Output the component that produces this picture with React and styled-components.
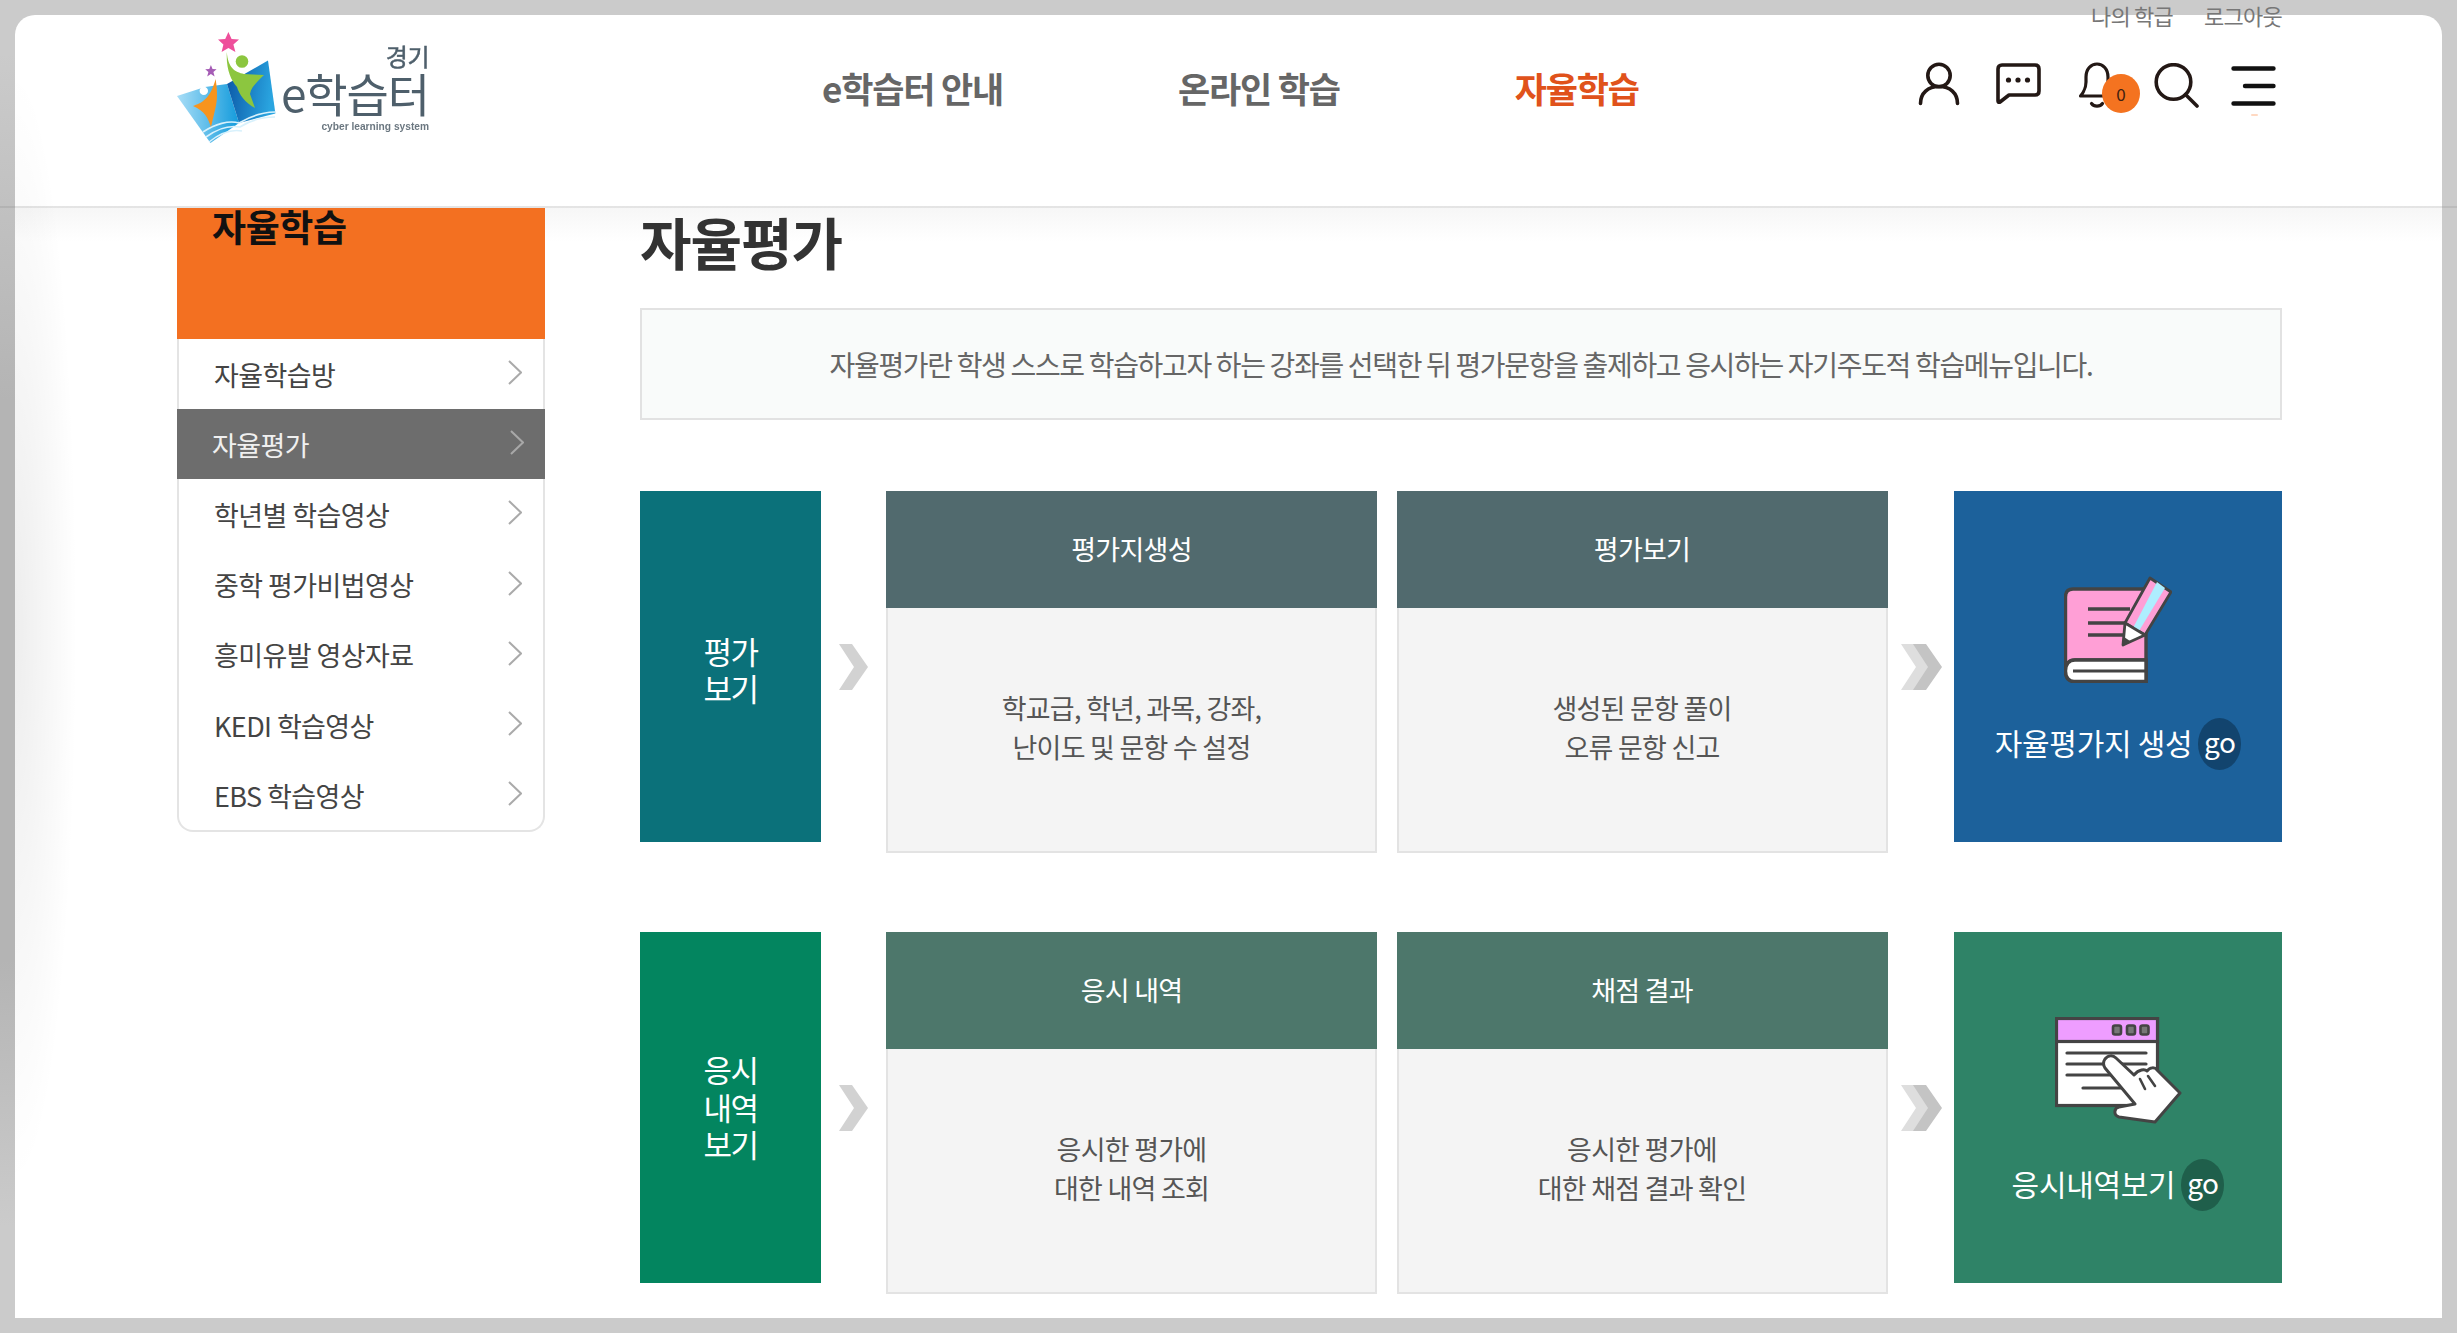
import React from "react";
import styled, { createGlobalStyle } from "styled-components";

const FONT = `"Noto Sans CJK KR", "Noto Sans", sans-serif`;

const Global = createGlobalStyle`
  html, body { margin: 0; padding: 0; height: 1333px; overflow: hidden; }
  body {
    font-family: ${FONT};
    background-color: #cbcbcb;
    background-image: linear-gradient(to bottom, #cbcbcb 4%, #b4b4b4 30%, #b4b4b4 72%, #cbcbcb 92%);
    background-size: 15px 100%;
    background-repeat: no-repeat;
  }
  * { box-sizing: border-box; }
`;

const Page = styled.div`
  padding: 15px 15px 15px 15px;
  height: 1333px;
`;

const Win = styled.div`
  position: relative;
  height: 1303px;
  background: #fff;
  border-radius: 20px;
  &::before {
    content: "";
    position: absolute;
    inset: 0;
    border-radius: 20px;
    pointer-events: none;
    background: radial-gradient(ellipse 62px 560px at 0 47%, rgba(0, 0, 0, 0.07), rgba(0, 0, 0, 0) 100%);
  }
`;

const HeaderRule = styled.div`
  position: absolute;
  left: -15px;
  right: -15px;
  top: 191px;
  height: 2px;
  background: rgba(0, 0, 0, 0.07);
`;

const Header = styled.header`
  position: relative;
  height: 191px;
  display: flex;
  align-items: flex-start;
  padding: 17px 166px 0 162px;
`;

const TopLinks = styled.div`
  position: absolute;
  top: -15px;
  right: 160px;
  display: flex;
  gap: 31px;
  font-size: 22px;
  line-height: 30px;
  letter-spacing: -0.75px;
  color: #777;
`;

const Logo = styled.a`
  display: flex;
  width: 252px;
  height: 111px;
  filter: blur(0.35px);
`;

const LogoMark = styled.svg`
  width: 100px;
  height: 111px;
  flex: none;
`;

const LogoText = styled.div`
  flex: 1;
  display: flex;
  flex-direction: column;
  align-items: flex-end;
  color: #4e5f6b;
  padding-top: 13px;
`;

const LogoRegion = styled.span`
  font-size: 24px;
  line-height: 22px;
  font-weight: 400;
  -webkit-text-stroke: 0.5px #4e5f6b;
  letter-spacing: -0.5px;
`;

const LogoName = styled.span`
  font-size: 46px;
  line-height: 50px;
  letter-spacing: -1.1px;
`;

const LogoSub = styled.span`
  font-family: "Liberation Sans", sans-serif;
  font-size: 10.2px;
  line-height: 11px;
  font-weight: 700;
  color: #6b7780;
  margin-top: 4px;
`;

const Nav = styled.nav`
  display: flex;
  gap: 175px;
  margin-left: 393px;
  margin-top: 32px;
`;

const NavItem = styled.a`
  font-size: 35px;
  line-height: 48px;
  font-weight: 700;
  letter-spacing: -1.2px;
  color: ${(p) => (p.$active ? "#e0521b" : "#666")};
`;

const IconBar = styled.div`
  display: flex;
  align-items: flex-start;
  margin-left: auto;
  margin-top: 30px;
`;

const IconSlot = styled.span`
  position: relative;
  display: block;
  flex: none;
  margin-left: ${(p) => p.$gap || 0}px;
`;

const Badge = styled.span`
  position: absolute;
  left: 24px;
  top: 12px;
  width: 38px;
  height: 39px;
  border-radius: 50%;
  background: #f47320;
  color: #402010;
  font-size: 17px;
  line-height: 39px;
  text-align: center;
`;

const MenuDot = styled.span`
  position: absolute;
  left: 20px;
  top: 52px;
  width: 7px;
  height: 2px;
  border-radius: 2px;
  background: #ffd9c2;
`;

const Body = styled.div`
  display: flex;
  gap: 95px;
  padding: 2px 160px 0 162px;
  background: linear-gradient(to bottom, #f6f6f6 0, #ffffff 36px);
  height: 1112px;
`;

const Side = styled.aside`
  width: 368px;
  flex: none;
`;

const SideHead = styled.div`
  height: 131px;
  background: #f37021;
  padding-left: 35px;
  font-size: 37px;
  line-height: 36px;
  font-weight: 700;
  letter-spacing: -0.4px;
  color: #111;
  h2 {
    margin: 0;
    font: inherit;
    letter-spacing: inherit;
  }
`;

const SideList = styled.ul`
  list-style: none;
  margin: 0;
  padding: 0 0 0 0;
  border: 2px solid #e4e4e4;
  border-top: 0;
  border-radius: 0 0 16px 16px;
`;

const SideItem = styled.li`
  display: flex;
  align-items: center;
  justify-content: space-between;
  height: 70.2px;
  margin: 0 -2px;
  padding: 0 ${(p) => (p.$active ? 21 : 23)}px 0 ${(p) => (p.$active ? 35 : 37)}px;
  font-size: 27px;
  letter-spacing: -0.6px;
  color: ${(p) => (p.$active ? "#f0f0f0" : "#444")};
  background: ${(p) => (p.$active ? "#6d6d6d" : "transparent")};
`;

const SideChevron = styled.svg`
  width: 14px;
  height: 25px;
  flex: none;
  margin-top: -3px;
`;

const Main = styled.main`
  flex: 1;
  min-width: 0;
`;

const Title = styled.h1`
  margin: 0;
  font-size: 56px;
  line-height: 66px;
  height: 100px;
  font-weight: 700;
  letter-spacing: -1px;
  color: #333;
`;

const Intro = styled.p`
  margin: 0 0 71px;
  height: 112px;
  display: flex;
  align-items: center;
  justify-content: center;
  border: 2px solid #e2e2e2;
  background: #f9fbfa;
  font-size: 28px;
  letter-spacing: -1.33px;
  color: #666;
`;

const Flow = styled.section`
  display: flex;
  align-items: flex-start;
  height: 362px;
  margin-bottom: 79px;
`;

const StepLabel = styled.div`
  width: 181px;
  height: 351px;
  flex: none;
  display: flex;
  align-items: center;
  justify-content: center;
  text-align: center;
  padding-top: ${(p) => p.$nudge}px;
  padding-bottom: ${(p) => (p.$nudge ? 0 : 2)}px;
  background: ${(p) => p.$bg};
  color: #fff;
  font-size: 31px;
  line-height: 37.5px;
  letter-spacing: -1.5px;
`;

const Connector = styled.div`
  width: ${(p) => p.$w}px;
  height: 351px;
  flex: none;
  display: flex;
  align-items: center;
  justify-content: ${(p) => (p.$double ? "flex-start" : "center")};
  padding-left: ${(p) => (p.$double ? 13 : 0)}px;
`;

const Cards = styled.div`
  display: flex;
  gap: 19.5px;
  flex: none;
`;

const Card = styled.article`
  width: 491px;
  height: 362px;
  display: flex;
  flex-direction: column;
`;

const CardHead = styled.h3`
  margin: 0;
  height: 117px;
  flex: none;
  display: flex;
  align-items: center;
  justify-content: center;
  padding-bottom: 2px;
  background: ${(p) => p.$bg};
  color: #fff;
  font-size: 27px;
  font-weight: 400;
  letter-spacing: -0.75px;
`;

const CardBody = styled.div`
  flex: 1;
  display: flex;
  align-items: center;
  justify-content: center;
  text-align: center;
  background: #f4f4f4;
  border: 2px solid #e3e3e3;
  border-top: 0;
  padding-bottom: 5px;
  color: #555;
  font-size: 27px;
  line-height: 39px;
  letter-spacing: -0.75px;
`;

const Action = styled.a`
  flex: 1;
  height: 351px;
  padding-top: 85px;
  display: flex;
  flex-direction: column;
  align-items: center;
  background: ${(p) => p.$bg};
  color: #fff;
`;

const ActionIcon = styled.svg`
  height: 107px;
  flex: none;
`;

const ActionLabel = styled.div`
  display: flex;
  align-items: center;
  gap: 6px;
  margin-top: 35px;
  height: 52px;
  font-size: 30px;
  letter-spacing: -0.3px;
`;

const ActionText = styled.span`
  padding-bottom: 5px;
`;

const Go = styled.span`
  width: 43px;
  height: 52px;
  border-radius: 50%;
  background: ${(p) => p.$bg};
  display: flex;
  align-items: center;
  justify-content: center;
  font-size: 28px;
  letter-spacing: -0.5px;
  padding-bottom: 7px;
`;

const ic = { fill: "none", stroke: "#231815", strokeWidth: 3.6, strokeLinecap: "round", strokeLinejoin: "round" };

const MarkSvg = () => (
  <LogoMark viewBox="0 0 100 111">
    <defs>
      <linearGradient id="lp" x1="0" y1="0" x2="1" y2="0">
        <stop offset="0" stopColor="#a9def7" />
        <stop offset="1" stopColor="#139bdc" />
      </linearGradient>
      <linearGradient id="rp" x1="0" y1="0" x2="1" y2="0.2">
        <stop offset="0" stopColor="#0a55a5" />
        <stop offset="1" stopColor="#2aa5e0" />
      </linearGradient>
    </defs>
    <polygon points="0,64 28,55 50,52 62,91 33.5,111" fill="url(#lp)" />
    <polygon points="50,52 91,28.5 98.4,81.5 62,91" fill="url(#rp)" />
    <path d="M26 100 C38 92 52 88 62 91 C74 84 86 80 98 80 M29 105 C40 97 52 93 63 95 C74 88 86 85 98 85 M32 110 C42 102 54 97 65 99" fill="none" stroke="#d8f1fc" strokeWidth="1.6" />
    <circle cx="26.8" cy="58.9" r="4.2" fill="#fff" />
    <path d="M38.6 47 C41 62 40 70 38 78 L34 95 C31 86 28 79 16 74 C24 71 33 68 38.6 47Z" fill="#f7941d" />
    <path d="M49.8 20 C51 36 58 40 67 42 L87 43 C80 50 74 55 73 62 L78 76 C68 71 62 62 60 55 C54 48 49 38 49.8 20Z" fill="#8cc63f" />
    <circle cx="65" cy="29.5" r="6.3" fill="#8cc63f" />
    <polygon points="51.4,-1 54.6,6 62,6.6 56.4,11.6 58.4,19 51.4,15 44.6,19 46.4,11.6 41,6.6 48.2,6" fill="#ee4f9b" transform="translate(0 1)" />
    <polygon points="33.9,33 35.5,37 39.6,37.3 36.4,40 37.6,44.4 33.9,42 30.2,44.4 31.4,40 28.2,37.3 32.3,37" fill="#a55cb5" />
  </LogoMark>
);

const BookIcon = () => (
  <ActionIcon viewBox="0 0 108 107" width="108">
    <path d="M82 13 H9 C4 13 1.5 16 1.5 21 V96 C1.5 102 5 105.5 10 105.5 H82 V84" fill="#ff9fd6" stroke="#444" strokeWidth="3.4" />
    <path d="M82 13 V84 H11 C5 84 1.5 88 1.5 94" fill="none" stroke="#444" strokeWidth="3.4" />
    <path d="M82 84 H11 C5 84 1.5 88 1.5 95 C1.5 101 5 105.5 10 105.5 H82Z" fill="#fff" stroke="#444" strokeWidth="3.4" />
    <path d="M9 95 H81" stroke="#444" strokeWidth="3" fill="none" />
    <path d="M24 33 H66 M24 47 H63 M24 59 H60" stroke="#444" strokeWidth="3.6" fill="none" />
    <polygon points="61,47 86,2 107,16 81,59" fill="#ff9fd6" stroke="#444" strokeWidth="2.8" strokeLinejoin="round" />
    <polygon points="69,52 93,6 101,12 75,55" fill="#aeeeff" />
    <polygon points="61,47 81,59 59,69" fill="#fff" stroke="#444" strokeWidth="2.8" strokeLinejoin="round" />
    <polygon points="60,61 66,65 59,69" fill="#444" />
  </ActionIcon>
);

const BrowserIcon = () => (
  <ActionIcon viewBox="0 0 127 107" width="127">
    <rect x="1.5" y="1.5" width="101" height="87" fill="#fff" stroke="#444" strokeWidth="3.2" />
    <rect x="1.5" y="1.5" width="101" height="23" fill="#ee9dff" stroke="#444" strokeWidth="3.2" />
    <g fill="#777" stroke="#444" strokeWidth="2.6">
      <rect x="58" y="8.5" width="8" height="9" rx="2" />
      <rect x="72" y="8.5" width="8" height="9" rx="2" />
      <rect x="85.5" y="8.5" width="8" height="9" rx="2" />
    </g>
    <path d="M12 36 H91 M12 47 H91 M12 58 H62 M28 71 H68" stroke="#444" strokeWidth="3.2" fill="none" strokeLinecap="round" />
    <path d="M50 42 C53 38 58 38 61 41 L79 58 C84 52 90 52 92 54 C95 50 100 50 102 53 L125 76 L100 105 L64 100 C58 98 59 91 64 90 L80 87 L50 51 C48 48 48 45 50 42Z" fill="#fff" stroke="#444" strokeWidth="3" strokeLinejoin="round" />
    <path d="M85 62 L90 72 M93 59 L100 69" stroke="#444" strokeWidth="2.6" fill="none" strokeLinecap="round" />
  </ActionIcon>
);

const SingleChevron = () => (
  <svg width="29" height="46" viewBox="0 0 29 46">
    <polygon points="0,0 13,0 29,23 13,46 0,46 15,23" fill="#d2d2d2" />
  </svg>
);

const DoubleChevron = () => (
  <svg width="41" height="46" viewBox="0 0 41 46">
    <polygon points="0,0 13,0 29,23 13,46 0,46 15,23" fill="#dedede" />
    <polygon points="12,0 25,0 41,23 25,46 12,46 27,23" fill="#c4c4c4" />
  </svg>
);

const menu = ["자율학습방", "자율평가", "학년별 학습영상", "중학 평가비법영상", "흥미유발 영상자료", "KEDI 학습영상", "EBS 학습영상"];

const flows = [
  {
    label: ["평가", "보기"],
    nudge: 5,
    bg: "#0b717a",
    head: "#516a6e",
    cards: [
      { t: "평가지생성", b: ["학교급, 학년, 과목, 강좌,", "난이도 및 문항 수 설정"] },
      { t: "평가보기", b: ["생성된 문항 풀이", "오류 문항 신고"] },
    ],
    action: "자율평가지 생성",
    actionBg: "#1c619b",
    goBg: "#12446e",
    Icon: BookIcon,
  },
  {
    label: ["응시", "내역", "보기"],
    nudge: 0,
    bg: "#03855f",
    head: "#4d776b",
    cards: [
      { t: "응시 내역", b: ["응시한 평가에", "대한 내역 조회"] },
      { t: "채점 결과", b: ["응시한 평가에", "대한 채점 결과 확인"] },
    ],
    action: "응시내역보기",
    actionBg: "#2f8367",
    goBg: "#1f5f4b",
    Icon: BrowserIcon,
  },
];

export default function App() {
  return (
    <>
      <Global />
      <Page>
        <Win>
          <Header>
            <Logo>
              <MarkSvg />
              <LogoText>
                <LogoRegion>경기</LogoRegion>
                <LogoName>e학습터</LogoName>
                <LogoSub>cyber learning system</LogoSub>
              </LogoText>
            </Logo>
            <Nav>
              <NavItem>e학습터 안내</NavItem>
              <NavItem>온라인 학습</NavItem>
              <NavItem $active>자율학습</NavItem>
            </Nav>
            <IconBar>
              <IconSlot>
                <svg width="42" height="44" viewBox="0 0 42 44" {...ic}>
                  <circle cx="21" cy="13.5" r="11.2" />
                  <path d="M2.5 41.5 C2.5 31 10 24.5 21 24.5 C32 24.5 39.5 31 39.5 41.5" />
                </svg>
              </IconSlot>
              <IconSlot $gap={36}>
                <svg width="45" height="41" viewBox="0 0 45 41" {...ic} style={{ display: "block", marginTop: 1 }}>
                  <path d="M6 2 H39 C41.5 2 43 3.5 43 6 V28 C43 30.5 41.5 32 39 32 H13 L4 39 C2.6 39.6 2 39 2 38 V6 C2 3.5 3.5 2 6 2Z" />
                  <g fill="#231815" stroke="none">
                    <circle cx="12.5" cy="17" r="2.6" />
                    <circle cx="22" cy="17" r="2.6" />
                    <circle cx="31.5" cy="17" r="2.6" />
                  </g>
                </svg>
              </IconSlot>
              <IconSlot $gap={37}>
                <svg width="37" height="47" viewBox="0 0 37 47" {...ic} strokeWidth="3.2">
                  <path d="M2.5 34 C2.5 34 8 28 8 20 V15 C8 7 13 2 19 2 C25 2 30 7 30 15 V20 C30 28 35 34 35 34 Z" />
                  <path d="M13.5 41.5 C16 45 22 45 24.5 41.5" />
                </svg>
                <Badge>0</Badge>
              </IconSlot>
              <IconSlot $gap={39}>
                <svg width="45" height="45" viewBox="0 0 45 45" {...ic} style={{ display: "block", marginTop: 1 }}>
                  <circle cx="19.5" cy="19" r="17.3" />
                  <path d="M31.5 31.5 L43 43" />
                </svg>
              </IconSlot>
              <IconSlot $gap={32}>
                <svg width="45" height="42" viewBox="0 0 45 42" {...ic} stroke="#111" strokeWidth="4.4" style={{ display: "block", marginTop: 3 }}>
                  <path d="M2.5 3.5 H42.5 M14 21 H42.5 M2.5 38.5 H42.5" />
                </svg>
                <MenuDot />
              </IconSlot>
            </IconBar>
            <TopLinks>
              <span>나의 학급</span>
              <span>로그아웃</span>
            </TopLinks>
          </Header>
          <HeaderRule />
          <Body>
            <Side>
              <SideHead>
                <h2>자율학습</h2>
              </SideHead>
              <SideList>
                {menu.map((m, i) => (
                  <SideItem key={m} $active={i === 1}>
                    <span>{m}</span>
                    <SideChevron viewBox="0 0 14 25">
                      <polyline points="1,1 13,12.5 1,24" fill="none" stroke={i === 1 ? "#a8a8a8" : "#aaa"} strokeWidth="2" />
                    </SideChevron>
                  </SideItem>
                ))}
              </SideList>
            </Side>
            <Main>
              <Title>자율평가</Title>
              <Intro>자율평가란 학생 스스로 학습하고자 하는 강좌를 선택한 뒤 평가문항을 출제하고 응시하는 자기주도적 학습메뉴입니다.</Intro>
              {flows.map((f) => (
                <Flow key={f.action}>
                  <StepLabel $bg={f.bg} $nudge={f.nudge}>
                    <div>
                      {f.label.map((l) => (
                        <div key={l}>{l}</div>
                      ))}
                    </div>
                  </StepLabel>
                  <Connector $w={65}>
                    <SingleChevron />
                  </Connector>
                  <Cards>
                    {f.cards.map((c) => (
                      <Card key={c.t}>
                        <CardHead $bg={f.head}>{c.t}</CardHead>
                        <CardBody>
                          <div>
                            {c.b.map((l) => (
                              <div key={l}>{l}</div>
                            ))}
                          </div>
                        </CardBody>
                      </Card>
                    ))}
                  </Cards>
                  <Connector $w={66.5} $double>
                    <DoubleChevron />
                  </Connector>
                  <Action $bg={f.actionBg}>
                    <f.Icon />
                    <ActionLabel>
                      <ActionText>{f.action}</ActionText>
                      <Go $bg={f.goBg}>go</Go>
                    </ActionLabel>
                  </Action>
                </Flow>
              ))}
            </Main>
          </Body>
        </Win>
      </Page>
    </>
  );
}
